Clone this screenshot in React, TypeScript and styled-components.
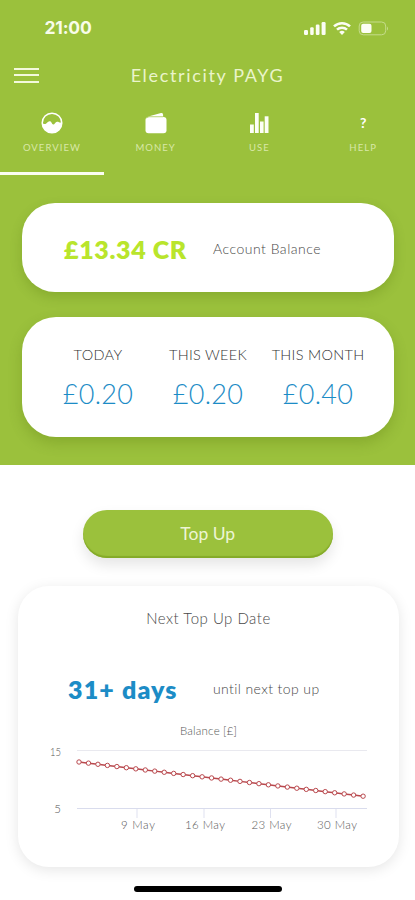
import React from 'react';
import styled, { createGlobalStyle } from 'styled-components';

const GREEN = '#9bc13c';
const BLUE = '#1c8cc6';

const GlobalStyle = createGlobalStyle`
  * { box-sizing: border-box; }
  body { margin: 0; background: #fff; overflow: hidden; }
`;

const Screen = styled.div`
  width: 415px;
  height: 900px;
  display: flex;
  flex-direction: column;
  background: #fff;
  font-family: Lato, 'Liberation Sans', sans-serif;
  overflow: hidden;
`;

const Hero = styled.section`
  height: 465px;
  flex: none;
  background: ${GREEN};
  display: flex;
  flex-direction: column;
`;

const StatusBar = styled.div`
  height: 56px;
  padding: 0 27px 0 44.5px;
  display: flex;
  align-items: center;
  justify-content: space-between;
`;

const Clock = styled.span`
  font: 700 17.5px/20px Inter, sans-serif;
  letter-spacing: -0.2px;
  color: #f8fce9;
`;

const TitleBar = styled.header`
  height: 38px;
  padding: 0 14px;
  display: grid;
  grid-template-columns: 26px 1fr 26px;
  align-items: center;
`;

const MenuButton = styled.button`
  height: 15px;
  padding: 0;
  border: 0;
  background: none;
  display: flex;
  flex-direction: column;
  justify-content: space-between;
`;

const MenuLine = styled.span`
  width: 25px;
  height: 2px;
  background: #f3f9dc;
`;

const Title = styled.h1`
  margin: 0;
  text-align: center;
  font-weight: 400;
  font-size: 18px;
  line-height: 24px;
  letter-spacing: 1.65px;
  color: #eaf4cb;
`;

const Tabs = styled.nav`
  height: 81px;
  display: grid;
  grid-template-columns: repeat(4, 1fr);
`;

const Tab = styled.div<{ $active?: boolean }>`
  display: flex;
  flex-direction: column;
  align-items: center;
  padding-top: 17px;
  border-bottom: 3px solid ${(p) => (p.$active ? '#fbfdf2' : 'transparent')};
`;

const TabIcon = styled.div`
  height: 24px;
  display: flex;
  align-items: center;
  justify-content: center;
  color: #fff;
`;

const QuestionMark = styled.span`
  font: 700 14px/24px Lato, sans-serif;
`;

const TabLabel = styled.span`
  margin-top: 6px;
  font-size: 9.5px;
  line-height: 13px;
  letter-spacing: 1.05px;
  color: #d9e8a8;
`;

const BalanceCard = styled.div`
  margin: 28px 21px 0 22px;
  height: 89px;
  flex: none;
  border-radius: 33px;
  background: #fff;
  box-shadow: 0 5px 12px rgba(70, 100, 0, 0.22);
  display: flex;
  align-items: center;
  padding: 2px 0 0 42px;
`;

const BalanceAmount = styled.strong`
  width: 149px;
  font: 800 25px/32px Lato, sans-serif;
  letter-spacing: 0.65px;
  white-space: nowrap;
  color: #b9e52c;
`;

const SideNote = styled.span<{ $spacing: number }>`
  font-size: 14px;
  line-height: 20px;
  font-weight: 300;
  white-space: nowrap;
  letter-spacing: ${(p) => p.$spacing}px;
  color: #484848;
`;

const SpendCard = styled.div`
  margin: 25px 21px 0 22px;
  height: 120px;
  flex: none;
  border-radius: 34px;
  background: #fff;
  box-shadow: 0 6px 14px rgba(70, 100, 0, 0.24);
  display: grid;
  grid-template-columns: repeat(3, 110px);
  padding: 27px 0 0 21px;
`;

const SpendColumn = styled.div`
  display: flex;
  flex-direction: column;
  align-items: center;
`;

const SpendLabel = styled.span`
  font-size: 14.5px;
  line-height: 22px;
  font-weight: 300;
  letter-spacing: 0.3px;
  white-space: nowrap;
  color: #333;
`;

const SpendValue = styled.span`
  margin-top: 11px;
  font-size: 27px;
  line-height: 34px;
  font-weight: 300;
  letter-spacing: 0.3px;
  color: ${BLUE};
`;

const TopUpButton = styled.button`
  margin: 45px 0 0 83px;
  width: 249.5px;
  height: 48px;
  flex: none;
  padding: 0;
  border: 0;
  border-radius: 24px;
  background: ${GREEN};
  box-shadow: inset 0 -2px 1px #84aa28, 0 7px 14px rgba(0, 0, 0, 0.1);
  font: 400 17.5px/24px Lato, sans-serif;
  letter-spacing: 0;
  color: #edf5d4;
`;

const ForecastCard = styled.section`
  margin: 28px 16px 0 18px;
  height: 281px;
  flex: none;
  border-radius: 31px;
  background: #fff;
  box-shadow: 0 3px 14px rgba(0, 0, 0, 0.1);
  display: flex;
  flex-direction: column;
`;

const ForecastTitle = styled.h2`
  margin: 21px 0 0;
  text-align: center;
  font-size: 15px;
  line-height: 22px;
  font-weight: 300;
  letter-spacing: 0.5px;
  color: #484848;
`;

const ForecastRow = styled.div`
  margin-top: 44px;
  height: 32px;
  padding-left: 50px;
  display: flex;
  align-items: center;
`;

const DaysLeft = styled.strong`
  width: 145px;
  font: 800 25px/32px Lato, sans-serif;
  letter-spacing: 1.15px;
  white-space: nowrap;
  color: ${BLUE};
`;

const ChartWrap = styled.div`
  margin-top: 16px;
  height: 120px;

  svg { display: block; }
  text {
    font-family: Lato, sans-serif;
    font-size: 11.5px;
    font-weight: 300;
    fill: #555;
  }
`;

const HomeIndicator = styled.div`
  margin: 19px 0 0 134px;
  width: 148px;
  height: 6px;
  flex: none;
  border-radius: 3px;
  background: #000;
`;

const StatusIcons = () => (
  <svg width="84" height="16" viewBox="0 0 84 16" fill="#fbfdf4">
    <rect x="0" y="10" width="4" height="5" rx="1.2" />
    <rect x="6.2" y="7.3" width="3.5" height="7.7" rx="1.2" />
    <rect x="11.8" y="4.5" width="3.7" height="10.5" rx="1.2" />
    <rect x="17.6" y="2" width="4" height="13" rx="1.2" />
    <g fill="none" stroke="#fbfdf4" strokeWidth="2.5">
      <path d="M30 6.4a11.5 11.5 0 0 1 16 0" />
      <path d="M33 9.7a7.2 7.2 0 0 1 10 0" />
    </g>
    <path d="M35.2 12a4.4 4.4 0 0 1 5.6 0L38 15Z" />
    <rect x="55.2" y="2" width="26.5" height="12.8" rx="4" fill="none" stroke="#c5dc8b" />
    <path d="M83 6.4v4.2q1-.7 1-2.1t-1-2.1Z" fill="#c5dc8b" />
    <rect x="57.2" y="3.8" width="10.3" height="9.2" rx="2" />
  </svg>
);

const OverviewIcon = () => (
  <svg width="22" height="22" viewBox="0 0 22 22">
    <circle cx="11" cy="11" r="9.8" fill="none" stroke="#fff" strokeWidth="1.5" />
    <path
      fill="#fff"
      d="M1.2 11Q3 12.6 5 11.7C6.6 10.2 7.5 9 9 9.2c1.7.2 1.8 3.1 3.2 3.4 1.3.2 2.1-2.4 3.8-2.8 1.5-.3 2.7 1.3 4.8.5A10 10 0 0 1 11 21 10 10 0 0 1 1.2 11Z"
    />
  </svg>
);

const WalletIcon = () => (
  <svg width="22" height="22" viewBox="0 0 22 22" fill="#fff">
    <path d="M2.3 4.8 16 1.1q1.8-.4 2 1.3l.2 2.4Z" />
    <rect x="0.5" y="5.1" width="21" height="16.2" rx="3" />
    <path d="M1 6.1 4 4.8h14" stroke={GREEN} strokeWidth="0.55" fill="none" />
  </svg>
);

const BarsIcon = () => (
  <svg width="20" height="22" viewBox="0 0 20 22" fill="#fcfef6">
    <rect x="1" y="12.5" width="3.8" height="8.5" />
    <rect x="6" y="1" width="3.7" height="20" />
    <rect x="11" y="9.5" width="3.6" height="11.5" />
    <rect x="15.7" y="4.3" width="3.8" height="16.7" />
  </svg>
);

const tabs = [
  { label: 'OVERVIEW', icon: <OverviewIcon />, active: true },
  { label: 'MONEY', icon: <WalletIcon /> },
  { label: 'USE', icon: <BarsIcon /> },
  { label: 'HELP', icon: <QuestionMark>?</QuestionMark> },
];

const spend = [
  { label: 'TODAY', value: '£0.20' },
  { label: 'THIS WEEK', value: '£0.20' },
  { label: 'THIS MONTH', value: '£0.40' },
];

const dates = [
  { label: '9 May', x: 119 },
  { label: '16 May', x: 186 },
  { label: '23 May', x: 252.5 },
  { label: '30 May', x: 318 },
];

const points = Array.from({ length: 31 }, (_, i) => ({
  x: 61 + i * 9.47,
  y: 41 + i * 1.14,
}));

const BalanceChart = () => (
  <svg width="381" height="120" viewBox="0 0 381 120">
    <text x="190.5" y="14" textAnchor="middle" textLength="57">Balance [£]</text>
    <text x="43" y="35" textAnchor="end" textLength="11" lengthAdjust="spacingAndGlyphs">15</text>
    <text x="43" y="91.5" textAnchor="end">5</text>
    <path d="M59 29.5H349" stroke="#e9e9ef" />
    <path d="M59 87.5H349" stroke="#d9dced" />
    {dates.map((d) => (
      <g key={d.label}>
        <path d={`M${d.x} 88v9`} stroke="#dfe1f0" />
        <text x={d.x + 1} y="107.5" textAnchor="middle" textLength={d.label.length > 5 ? 40 : 34}>
          {d.label}
        </text>
      </g>
    ))}
    <polyline
      points={points.map((p) => `${p.x},${p.y}`).join(' ')}
      fill="none"
      stroke="#b9484d"
      strokeWidth="1.5"
    />
    {points.map((p) => (
      <circle key={p.x} cx={p.x} cy={p.y} r="2.2" fill="#fff" stroke="#b9484d" />
    ))}
  </svg>
);

export default function App() {
  return (
    <>
      <GlobalStyle />
      <Screen>
        <Hero>
          <StatusBar>
            <Clock>21:00</Clock>
            <StatusIcons />
          </StatusBar>
          <TitleBar>
            <MenuButton aria-label="Menu">
              <MenuLine />
              <MenuLine />
              <MenuLine />
            </MenuButton>
            <Title>Electricity PAYG</Title>
          </TitleBar>
          <Tabs>
            {tabs.map((t) => (
              <Tab key={t.label} $active={t.active}>
                <TabIcon>{t.icon}</TabIcon>
                <TabLabel>{t.label}</TabLabel>
              </Tab>
            ))}
          </Tabs>
          <BalanceCard>
            <BalanceAmount>£13.34 CR</BalanceAmount>
            <SideNote $spacing={0.5}>Account Balance</SideNote>
          </BalanceCard>
          <SpendCard>
            {spend.map((s) => (
              <SpendColumn key={s.label}>
                <SpendLabel>{s.label}</SpendLabel>
                <SpendValue>{s.value}</SpendValue>
              </SpendColumn>
            ))}
          </SpendCard>
        </Hero>
        <TopUpButton>Top Up</TopUpButton>
        <ForecastCard>
          <ForecastTitle>Next Top Up Date</ForecastTitle>
          <ForecastRow>
            <DaysLeft>31+ days</DaysLeft>
            <SideNote $spacing={0.4}>until next top up</SideNote>
          </ForecastRow>
          <ChartWrap>
            <BalanceChart />
          </ChartWrap>
        </ForecastCard>
        <HomeIndicator />
      </Screen>
    </>
  );
}
